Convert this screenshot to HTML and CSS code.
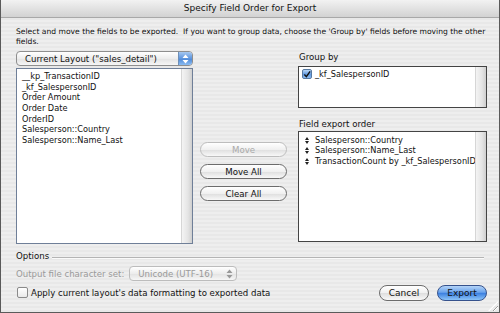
FILE: index.html
```html
<!DOCTYPE html>
<html lang="en">
<head>
  <meta charset="UTF-8">
  <title>Specify Field Order for Export</title>
  <link rel="stylesheet" href="styles.css">
</head>
<body>
  <div class="window">
    <div class="titlebar">Specify Field Order for Export</div>

    <div class="content">
      <p class="intro">Select and move the fields to be exported.&nbsp; If you want to group data, choose the 'Group by' fields before moving the other fields.</p>

      <div class="columns">
        <!-- source fields -->
        <div class="col-left">
          <div class="popup">
            <span class="popup-text">Current Layout ("sales_detail")</span>
            <span class="stepper">
              <svg width="7" height="10" viewBox="0 0 7 10"><path d="M3.5 0.5 L6.5 4 H0.5 Z M3.5 9.5 L6.5 6 H0.5 Z" fill="#fff"/></svg>
            </span>
          </div>
          <div class="listbox fields">
            <ul>
              <li>__kp_TransactionID</li>
              <li>_kf_SalespersonID</li>
              <li>Order Amount</li>
              <li>Order Date</li>
              <li>OrderID</li>
              <li>Salesperson::Country</li>
              <li>Salesperson::Name_Last</li>
            </ul>
            <div class="track"></div>
          </div>
        </div>

        <!-- move buttons -->
        <div class="col-mid">
          <button class="btn disabled">Move</button>
          <button class="btn">Move All</button>
          <button class="btn">Clear All</button>
        </div>

        <!-- group by / export order -->
        <div class="col-right">
          <div class="label">Group by</div>
          <div class="listbox group">
            <ul>
              <li><span class="check on">
                <svg width="9" height="9" viewBox="0 0 9 9"><path d="M1.5 4.5 L3.8 7 L8 1" stroke="#111" stroke-width="1.6" fill="none"/></svg>
              </span>_kf_SalespersonID</li>
            </ul>
            <div class="track"></div>
          </div>
          <div class="label second">Field export order</div>
          <div class="listbox order">
            <ul>
              <li><span class="grip"><svg width="4" height="7" viewBox="0 0 4 7"><path d="M2 0 L4 3 H0 Z M2 7 L4 4 H0 Z" fill="#222"/></svg></span>Salesperson::Country</li>
              <li><span class="grip"><svg width="4" height="7" viewBox="0 0 4 7"><path d="M2 0 L4 3 H0 Z M2 7 L4 4 H0 Z" fill="#222"/></svg></span>Salesperson::Name_Last</li>
              <li><span class="grip"><svg width="4" height="7" viewBox="0 0 4 7"><path d="M2 0 L4 3 H0 Z M2 7 L4 4 H0 Z" fill="#222"/></svg></span>TransactionCount by _kf_SalespersonID</li>
            </ul>
            <div class="track"></div>
          </div>
        </div>
      </div>

      <div class="options">
        <span>Options</span>
        <span class="rule"></span>
      </div>

      <div class="charset">
        <span class="muted">Output file character set:</span>
        <div class="popup small disabled">
          <span class="popup-text">Unicode (UTF-16)</span>
          <span class="stepper grey">
            <svg width="7" height="10" viewBox="0 0 7 10"><path d="M3.5 0.5 L6.5 4 H0.5 Z M3.5 9.5 L6.5 6 H0.5 Z" fill="#999"/></svg>
          </span>
        </div>
      </div>

      <div class="bottom">
        <label class="apply"><span class="check"></span>Apply current layout's data formatting to exported data</label>
        <div class="actions">
          <button class="btn">Cancel</button>
          <button class="btn default">Export</button>
        </div>
      </div>
    </div>
    <span class="grow"></span>
  </div>
</body>
</html>
```

FILE: styles.css
```css
* { box-sizing: border-box; }

body {
  margin: 0;
  font-family: "DejaVu Sans", Verdana, sans-serif;
  font-size: 7.6px;
  color: #111;
}

.window {
  position: relative;
  width: 500px;
  height: 313px;
  border: 1px solid #5a5a5a;
  border-top: 0;
  background: repeating-linear-gradient(#eeeeee 0 2px, #e8e8e8 2px 4px);
}

.titlebar {
  height: 18px;
  line-height: 17px;
  text-align: center;
  font-size: 9px;
  color: #111;
  background: linear-gradient(#f2f2f2, #d2d2d2);
  border-bottom: 1px solid #a8a8a8;
}

.content {
  padding: 9px 12px 0 15px;
}

.intro {
  margin: 0;
  line-height: 9.5px;
}

.columns {
  display: flex;
  margin-top: 5px;
}

.col-left { width: 177px; flex: none; }

.popup {
  display: flex;
  align-items: center;
  height: 15px;
  border: 1px solid #8e8e8e;
  border-radius: 4px;
  background: linear-gradient(#ffffff, #ededed 50%, #e2e2e2 51%, #f6f6f6);
  overflow: hidden;
}
.popup-text {
  flex: 1;
  padding-left: 8px;
  font-size: 8.6px;
}
.stepper {
  width: 14px;
  height: 100%;
  display: flex;
  align-items: center;
  justify-content: center;
  background: linear-gradient(#a6c8f0, #5d95de 50%, #4a86d6 51%, #8bbcf2);
  border-left: 1px solid #6d8fb8;
}
.stepper.grey {
  background: none;
  border-left: 0;
}

.listbox {
  position: relative;
  background: #fff;
  border: 1px solid #6f7f98;
}
.listbox ul {
  list-style: none;
  margin: 0;
  padding: 2px 0 0 5px;
}
.listbox li {
  height: 10.7px;
  line-height: 10.7px;
  font-size: 8.2px;
}
.track {
  position: absolute;
  top: 0;
  right: 0;
  bottom: 0;
  width: 11px;
  background: linear-gradient(90deg, #f4f4f4, #e4e4e4 60%, #cfcfcf);
  border-left: 1px solid #d6d6d6;
}

.fields {
  height: 176px;
  margin-top: 2px;
}

.col-mid {
  width: 105px;
  flex: none;
  display: flex;
  flex-direction: column;
  gap: 7px;
  padding: 91px 11px 0 7px;
}

.btn {
  height: 15px;
  padding: 0;
  border: 1px solid #6c6c6c;
  border-radius: 8px;
  font-family: inherit;
  font-size: 8.6px;
  color: #111;
  background: linear-gradient(#ffffff, #f0f0f0 50%, #dedede 51%, #f8f8f8);
}
.btn.disabled {
  color: #aaa;
  border-color: #bdbdbd;
}

.col-right { width: 189px; flex: none; }

.label {
  font-size: 8.6px;
  height: 15px;
  padding: 1px 0 0 1px;
}
.label.second {
  margin-top: 9px;
  height: 14px;
  padding-top: 2px;
}

.group {
  height: 42px;
  border-color: #444;
}
.group ul { padding: 2px 0 0 3px; }
.group li { display: flex; align-items: center; }

.order {
  height: 111px;
  border-color: #444;
}
.order ul { padding: 3px 0 0 6px; }
.order li { display: flex; align-items: center; height: 10.5px; }

.grip {
  display: inline-flex;
  width: 10px;
}

.check {
  display: inline-flex;
  align-items: center;
  justify-content: center;
  width: 10px;
  height: 10px;
  margin-right: 3px;
  border: 1px solid #8a8a8a;
  border-radius: 2px;
  background: linear-gradient(#ffffff, #e9e9e9);
}
.check.on {
  background: linear-gradient(#b8d6f6, #5f98e0 55%, #8dbcf0);
  border-color: #5678a0;
}

.options {
  display: flex;
  align-items: center;
  margin-top: 6px;
  height: 12px;
  font-size: 8.6px;
}
.rule {
  flex: 1;
  height: 0;
  margin: 3px 3px 0 3px;
  border-top: 1px solid #b4b4b4;
  border-bottom: 1px solid #fafafa;
}

.charset {
  display: flex;
  align-items: center;
  margin-top: 4px;
  height: 15px;
  font-size: 8.6px;
}
.muted { color: #9a9a9a; }
.popup.small {
  width: 108px;
  margin-left: 5px;
  border-color: #bcbcbc;
}
.popup.disabled .popup-text { color: #9a9a9a; }

.bottom {
  display: flex;
  align-items: center;
  justify-content: space-between;
  margin-top: 3px;
  height: 17px;
}
.apply {
  display: flex;
  align-items: center;
  font-size: 8.6px;
  padding-left: 1px;
}
.apply .check {
  width: 11px;
  height: 11px;
}
.actions {
  display: flex;
  gap: 8px;
}
.actions .btn {
  width: 50px;
  height: 16px;
  font-size: 9px;
}
.btn.default {
  border-color: #36528c;
  background: linear-gradient(#b4d4f8, #6aa3ec 45%, #3c80e0 52%, #8cc4f8);
}

.grow {
  position: absolute;
  right: 1px;
  bottom: 1px;
  width: 10px;
  height: 10px;
  background: repeating-linear-gradient(135deg, transparent 0 2px, #9c9c9c 2px 3px, #fff 3px 4px);
  clip-path: polygon(100% 0, 100% 100%, 0 100%);
}
```
